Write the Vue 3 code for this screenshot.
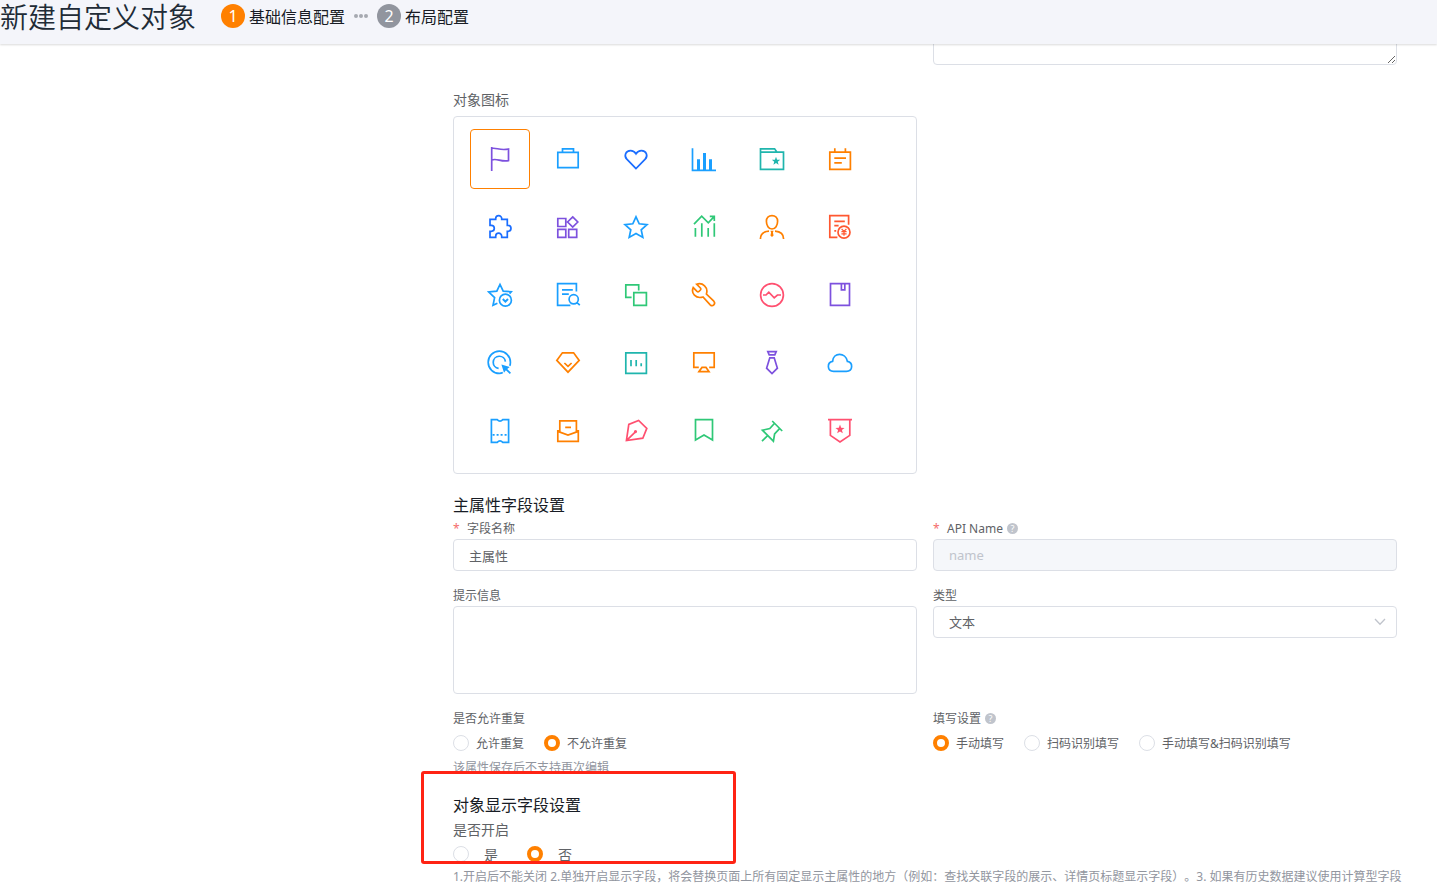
<script setup>
import { ref } from 'vue'

const circle = (x, y, r) => `M${x - r} ${y}a${r} ${r} 0 1 0 ${2 * r} 0a${r} ${r} 0 1 0 ${-2 * r} 0Z`
const star = (x, y, r) => {
  const pts = []
  for (let i = 0; i < 10; i++) {
    const q = i % 2 ? r * 0.42 : r
    const a = (Math.PI / 5) * i - Math.PI / 2
    pts.push(`${(x + q * Math.cos(a)).toFixed(2)} ${(y + q * Math.sin(a)).toFixed(2)}`)
  }
  return `M${pts.join('L')}Z`
}

const purple = '#7d51de'
const sky = '#1a9fff'
const blue = '#1a6dff'
const teal = '#1fb5ad'
const orange = '#ff8000'
const green = '#2fc877'
const red = '#ff5730'
const pink = '#ff5070'

const icons = [
  { name: '旗帜', color: purple, line: 'M4.7 1V25M4.7 2.5C9 1.2 13 5 21.5 3V14.6C14 16.4 10 11.8 4.7 14' },
  { name: '公文包', color: sky, line: 'M2.8 6.4H23.2V21.6H2.8ZM7.5 6.4V2.8H18.5V6.4' },
  { name: '爱心', color: blue, line: 'M13 22.6L3.8 13.2C.8 10 2.4 4.6 7.6 4.6C10.2 4.6 12 6.2 13 7.8C14 6.2 15.8 4.6 18.4 4.6C23.6 4.6 25.2 10 22.2 13.2Z' },
  { name: '柱状图', color: sky, line: 'M1.5 2.3V24.3H25', bold: 'M7.5 13.3V24.3M13.5 7V24.3M19.5 13.3V24.3' },
  { name: '文件夹', color: teal, line: 'M1.5 6.2H24.5V23.3H1.5ZM1.5 6.2V2.8H15.6L18 6.2', fill: star(17, 15.2, 4.4) },
  { name: '日历', color: orange, line: 'M2.8 6.2H23.4V23.3H2.8ZM7.8 2.3V6.2M18.4 2.3V6.2M7.3 12.2H19M7.3 16.8H14.8' },
  { name: '拼图', color: blue, line: 'M3 5.3H8.7V4.6A3 3 0 0 1 14.7 4.6V5.3H20.3V11.3H21A3 3 0 0 1 21 17.3H20.3V23.3H14.7V22.2A3 3 0 0 0 8.7 22.2V23.3H3V17.3H4.3A3 3 0 0 0 4.3 11.3H3Z' },
  { name: '应用', color: purple, line: 'M2.8 4.5H10.8V12.5H2.8ZM2.8 15.4H10.8V23.4H2.8ZM13.7 15.4H21.7V23.4H13.7ZM17.7 2.9L22.8 8L17.7 13.1L12.6 8Z' },
  { name: '星星', color: sky, line: 'M13 2.8L16.2 9.8L24 10.6L18.2 15.8L19.8 23.4L13 19.5L6.2 23.4L7.8 15.8L2 10.6L9.8 9.8Z' },
  { name: '趋势', color: green, line: 'M4.4 14V22.8M10.8 9.3V22.8M17.2 14V22.8M23.3 9.3V22.8M3 10.2L10.7 2.2L17.3 8.8L23.3 2.4M18.8 2.4H23.3V7' },
  { name: '人员', color: orange, line: 'M13 1.6C9.6 1.6 7.4 4 7.4 7.2C7.4 11.4 9.6 15 13 15C16.4 15 18.6 11.4 18.6 7.2C18.6 4 16.4 1.6 13 1.6ZM1.4 25C1.4 20.4 4.4 17.6 10 17.2M16 17.2C21.6 17.6 24.6 20.4 24.6 25', fill: 'M11.4 16.8H14.6L13.9 18.6L14.6 21.6L13 23L11.4 21.6L12.1 18.6Z' },
  { name: '发票', color: red, line: 'M10.4 23.4H2.8V1.7H21.6V10.8M7.3 7.4H17.8M7.3 11.7H11.6M7.3 16.8H9.2' + circle(17, 18.2, 6), thin: 'M14.6 14.8L17 17.4L19.4 14.8M17 17.4V21.8M14.4 17.6H19.6M14.4 19.8H19.6' },
  { name: '收藏', color: sky, line: 'M10.4 21.2L6 23.2L7.6 15.6L1.8 10L9.8 9.2L13 2.4L16.2 9.2L24.2 9.8L22.6 11.6' + circle(18.4, 18.2, 6), mark: 'M15.8 17L18.4 19.6L21 17' },
  { name: '文档查询', color: sky, line: 'M15.4 23.4H2.6V1.6H21.4V9.4M7 7.8H17.8M7 12.2H13.8M22 20.6L24.8 23.2' + circle(18.7, 17.3, 4.6) },
  { name: '复制', color: green, line: 'M8.6 15.3H2.8V2.8H15.7V8.4M10.8 10.6H23.4V23.4H10.8Z' },
  { name: '扳手', color: orange, line: 'M5.6 2.2L9.4 6Q10.2 7 9.4 8L8 9.4Q7 10.2 6 9.4L2.2 5.6C-.2 11 4.6 17.2 12 15L19.2 22.8C21.8 25.2 25 21.8 22.8 19.2L15.4 12C17.6 5.2 11.6 .2 5.6 2.2Z' },
  { name: '监测', color: pink, line: circle(13, 13, 11.4) + 'M4 13H7L9.8 10.2L15.2 15.8L18.4 13H22' },
  { name: '手册', color: purple, line: 'M3.5 1.6H22.5V23.4H3.5ZM14.4 1.6V7.8H17.8V1.6' },
  { name: '点击', color: sky, line: 'M12.6 23.4A11.1 11.1 0 1 1 23.4 12.6M11.6 18.4A6.1 6.1 0 1 1 18.4 11.6M23.4 12.6C23.4 14 23.2 15 22.8 15.8M12.6 23.4C14 23.4 15 23 15.8 22.6', fill: 'M14.4 14.4L22.8 17L20.2 18.9L24 22.8L22.8 24L18.9 20.2L17 22.8Z' },
  { name: '钻石', color: orange, line: 'M7.4 2.8H18.6L24.2 10.4L13 22.2L1.8 10.4ZM9.4 13L13 16.4L16.6 13' },
  { name: '看板', color: teal, line: 'M2.8 2.8H23.4V23.3H2.8ZM8 10V16.2M13.2 10V16.2M18.2 13.2V16.2' },
  { name: '显示器', color: orange, line: 'M7.8 17.4H2.8V2.8H23.2V17.4H18.2M8 21.6L11 17.4H15L18 21.6Z' },
  { name: '领带', color: purple, line: 'M8.8 1.6H17.2L15.8 4.8H10.2ZM10.8 7.8H15.2L18.4 18.2L13 23.6L7.6 18.2Z' },
  { name: '云', color: sky, line: 'M6.6 21.4C-.2 21.4 -.2 12.4 5.6 11.4C6.2 2 18.6 2 20.4 11.4C26.2 12.4 26.2 21.4 19.4 21.4Z' },
  { name: '票券', color: sky, line: 'M4.4 1.6H10.2Q13 4.6 15.8 1.6H21.6V24.4H15.8Q13 21.4 10.2 24.4H4.4Z', dash: 'M5.6 16.8H21' },
  { name: '收件箱', color: orange, line: 'M4.8 14V2.8H21.4V14M4.8 12.8H2.8V23.3H23.3V12.8H21.4M2.8 13.4L13 17L23.3 13.4M10.2 9.3H16' },
  { name: '钢笔', color: pink, line: 'M3.4 22.6L5.8 6.4L15.6 2.5L23.8 10.4L19.8 20.2ZM3.4 22.6L12.4 13.8', fill: circle(12.5, 13.6, 1.6) },
  { name: '书签', color: green, line: 'M4.5 1.6H21.5V22L13 17L4.5 22Z' },
  { name: '图钉', color: green, line: 'M13.2 3L23.2 13M15.6 5.2L10.8 10.6L3.4 12.2L14.4 23.2L15.6 16L20.8 10.4M3 23.2L8.6 17.6' },
  { name: '徽章', color: pink, line: 'M1 1.6H25M3.4 1.6V17.4L13 24L22.8 17.4V1.6', fill: star(13, 11.4, 4.8) }
]

const chosen = ref(0)
const fieldName = ref('主属性')
const apiName = ref('name')
const description = ref('')
const tip = ref('')
const type = ref('text')
const repeat = ref('no')
const fill = ref('manual')
const enabled = ref('no')
</script>

<template>
  <div class="page">
    <header class="bar">
      <h1>新建自定义对象</h1>
      <ol class="steps">
        <li class="current"><span class="num">1</span>基础信息配置</li>
        <li class="dots" aria-hidden="true">
          <svg width="14" height="4" viewBox="0 0 14 4"><circle cx="2" cy="2" r="2" /><circle cx="7" cy="2" r="2" /><circle cx="12" cy="2" r="2" /></svg>
        </li>
        <li><span class="num">2</span>布局配置</li>
      </ol>
    </header>

    <main>
      <div class="row first">
        <textarea v-model="description" class="box area resizable" aria-label="描述"></textarea>
      </div>

      <div class="row">
        <section>
          <h3 class="icon-label">对象图标</h3>
          <div class="box icons">
            <button
              v-for="(icon, i) in icons"
              :key="icon.name"
              type="button"
              class="icon"
              :class="{ on: chosen === i }"
              :aria-label="icon.name"
              :aria-pressed="chosen === i"
              @click="chosen = i"
            >
              <svg width="26" height="26" viewBox="0 0 26 26" :style="{ color: icon.color }">
                <path class="line" :d="icon.line" />
                <path v-if="icon.bold" class="line bold" :d="icon.bold" />
                <path v-if="icon.thin" class="line thin" :d="icon.thin" />
                <path v-if="icon.mark" class="line mark" :d="icon.mark" />
                <path v-if="icon.dash" class="line dash" :d="icon.dash" />
                <path v-if="icon.fill" class="solid" :d="icon.fill" />
              </svg>
            </button>
          </div>
        </section>
      </div>

      <section class="primary">
        <h2>主属性字段设置</h2>
        <div class="row">
          <div>
            <label class="label" for="field-name"><span class="must">*</span>字段名称</label>
            <input id="field-name" v-model="fieldName" class="box text" type="text" />
          </div>
          <div>
            <label class="label" for="api-name">
              <span class="must">*</span>API Name
              <span class="help">?</span>
            </label>
            <input id="api-name" v-model="apiName" class="box text" type="text" disabled />
          </div>
        </div>
        <div class="row spaced">
          <div>
            <label class="label" for="tip">提示信息</label>
            <textarea id="tip" v-model="tip" class="box area"></textarea>
          </div>
          <div>
            <label class="label" for="type">类型</label>
            <div class="select">
              <select id="type" v-model="type" class="box text">
                <option value="text">文本</option>
              </select>
              <svg class="arrow" width="12" height="8" viewBox="0 0 12 8"><path d="M1 1L6 6.3L11 1" /></svg>
            </div>
          </div>
        </div>
        <div class="row spaced">
          <div role="radiogroup" aria-labelledby="repeat-label">
            <div id="repeat-label" class="label">是否允许重复</div>
            <div class="options">
              <label><input v-model="repeat" type="radio" name="repeat" value="yes" />允许重复</label>
              <label><input v-model="repeat" type="radio" name="repeat" value="no" />不允许重复</label>
            </div>
            <p class="hint">该属性保存后不支持再次编辑</p>
          </div>
          <div role="radiogroup" aria-labelledby="fill-label">
            <div id="fill-label" class="label">填写设置<span class="help">?</span></div>
            <div class="options">
              <label><input v-model="fill" type="radio" name="fill" value="manual" />手动填写</label>
              <label><input v-model="fill" type="radio" name="fill" value="scan" />扫码识别填写</label>
              <label><input v-model="fill" type="radio" name="fill" value="both" />手动填写&amp;扫码识别填写</label>
            </div>
          </div>
        </div>
      </section>

      <section class="display">
        <h2>对象显示字段设置</h2>
        <div role="radiogroup" aria-labelledby="enabled-label">
          <div id="enabled-label" class="label large">是否开启</div>
          <div class="options large">
            <label><input v-model="enabled" type="radio" name="enabled" value="yes" />是</label>
            <label><input v-model="enabled" type="radio" name="enabled" value="no" />否</label>
          </div>
        </div>
        <p class="hint note">1.开启后不能关闭 2.单独开启显示字段，将会替换页面上所有固定显示主属性的地方（例如：查找关联字段的展示、详情页标题显示字段）。3. 如果有历史数据建议使用计算型字段</p>
        <div class="marker"></div>
      </section>
    </main>
  </div>
</template>

<style>
body {
  background: #fff;
}
</style>

<style scoped>
.page {
  height: 100vh;
  overflow: hidden;
  font-family: "Noto Sans", "Noto Sans CJK SC", sans-serif;
  font-size: 12px;
  color: #606266;
  text-spacing-trim: space-all;
}
.page * {
  box-sizing: border-box;
}
h1, h2, h3, p, ol {
  margin: 0;
  padding: 0;
  font-weight: 400;
}
input, textarea, select, button {
  font-family: inherit;
  margin: 0;
}
.bar {
  position: relative;
  z-index: 1;
  display: flex;
  align-items: flex-start;
  gap: 25px;
  height: 44px;
  background: #f4f5fa;
  box-shadow: 0 1px 2px rgba(0, 0, 0, 0.15);
}
h1 {
  font-size: 28px;
  line-height: 34px;
  font-weight: 350;
  color: #212b36;
}
.steps {
  display: flex;
  align-items: center;
  gap: 9px;
  height: 32px;
  list-style: none;
  font-size: 16px;
  color: #181c25;
}
.steps li {
  display: flex;
  align-items: center;
  gap: 4px;
}
.num {
  width: 24px;
  height: 24px;
  border-radius: 50%;
  background: #91959e;
  color: #fff;
  line-height: 24px;
  text-align: center;
}
.current .num {
  background: #ff8000;
}
.dots {
  fill: #a6a9b0;
}
main {
  padding: 0 40px 0 453px;
}
.row {
  display: grid;
  grid-template-columns: 1fr 1fr;
  gap: 16px;
}
.row > * {
  min-width: 0;
}
.first {
  margin-top: -67px;
}
.first > * {
  grid-column: 2;
}
.spaced {
  margin-top: 13px;
}
.box {
  display: block;
  width: 100%;
  border: 1px solid #dcdfe6;
  border-radius: 4px;
  background: #fff;
  color: #606266;
}
.area {
  height: 88px;
  resize: none;
}
.resizable {
  resize: vertical;
}
.icon-label {
  margin-top: 19px;
  font-size: 14px;
  line-height: 32px;
}
.icons {
  display: grid;
  grid-template-columns: repeat(auto-fill, 60px);
  gap: 8px;
  padding: 12px 16px;
}
.icon {
  display: flex;
  align-items: center;
  justify-content: center;
  height: 60px;
  padding: 0;
  border: 1px solid transparent;
  border-radius: 4px;
  background: none;
}
.icon.on {
  border-color: #ff8000;
}
.line {
  fill: none;
  stroke: currentColor;
  stroke-width: 1.7;
}
.bold {
  stroke-width: 3;
}
.thin {
  stroke-width: 1.2;
}
.mark {
  stroke-width: 2;
}
.dash {
  stroke-dasharray: 2 2;
}
.solid {
  fill: currentColor;
}
h2 {
  font-size: 16px;
  line-height: 24px;
  color: #181c25;
}
.primary {
  margin-top: 19px;
}
.label {
  display: flex;
  align-items: center;
  height: 22px;
}
.label.large {
  height: 24px;
  font-size: 14px;
}
.must {
  width: 6px;
  margin-right: 8px;
  color: #f56c6c;
}
.help {
  width: 11px;
  height: 11px;
  margin-left: 4px;
  border-radius: 50%;
  background: #c0c4cc;
  color: #fff;
  font-size: 9px;
  line-height: 11px;
  text-align: center;
}
.text {
  height: 32px;
  padding: 0 15px;
  font-size: 13px;
}
.text:disabled {
  background: #f5f7fa;
  color: #c0c4cc;
}
.select {
  position: relative;
}
select {
  appearance: none;
}
.arrow {
  position: absolute;
  top: 12px;
  right: 11px;
  fill: none;
  stroke: #c0c4cc;
  stroke-width: 1.3;
  pointer-events: none;
}
.options {
  display: flex;
  align-items: center;
  gap: 20px;
  height: 28px;
}
.options label {
  display: flex;
  align-items: center;
  gap: 7px;
}
.options.large {
  gap: 29px;
  height: 26px;
  font-size: 14px;
}
.options.large label {
  gap: 15px;
}
input[type="radio"] {
  appearance: none;
  width: 16px;
  height: 16px;
  border: 1px solid #dcdfe6;
  border-radius: 50%;
  background: #fff;
}
input[type="radio"]:checked {
  border: 4px solid #ff8000;
}
.hint {
  line-height: 22px;
  color: #91959e;
  white-space: nowrap;
}
.note {
  line-height: 20px;
}
.display {
  position: relative;
  margin-top: 14px;
}
.marker {
  position: absolute;
  top: -22px;
  left: -32px;
  width: 315px;
  height: 93px;
  border: 3px solid #ff2314;
  border-radius: 3px;
  pointer-events: none;
}
</style>
